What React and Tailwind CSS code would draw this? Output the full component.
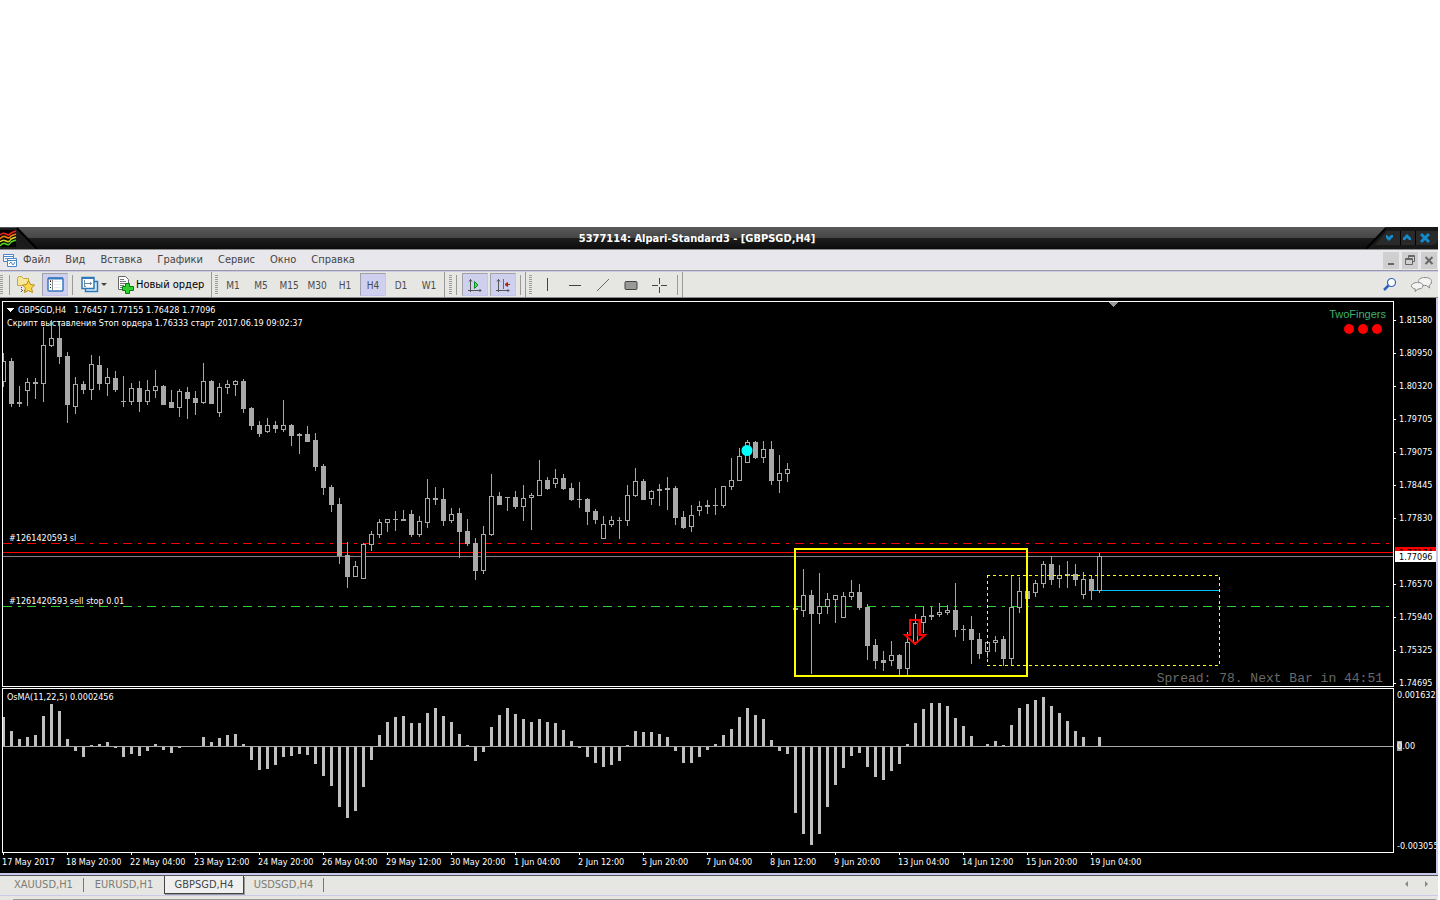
import React, { useState } from 'react';

// distance between two bars, and the x of the first one
const STEP = 8;
const FIRST = 3;

// [high, body top, body bottom, low, 1 = falling bar (filled)]
const CANDLES = [
  [353, 361, 382, 387, 0], [358, 361, 404, 407, 1], [386, 402, 404, 407, 1], [378, 382, 391, 406, 0],
  [378, 382, 384, 399, 1], [327, 345, 384, 402, 0], [320, 338, 346, 347, 0], [321, 338, 357, 364, 1],
  [352, 356, 405, 423, 1], [377, 384, 407, 414, 0], [381, 384, 390, 394, 1], [355, 364, 390, 400, 0],
  [356, 365, 384, 390, 1], [368, 377, 384, 396, 0], [371, 378, 390, 392, 1], [376, 401, 402, 407, 1],
  [383, 388, 402, 405, 0], [381, 388, 402, 412, 1], [380, 390, 402, 405, 0], [370, 386, 391, 398, 0],
  [385, 386, 405, 405, 1], [390, 402, 408, 408, 1], [389, 391, 408, 417, 0], [387, 392, 399, 419, 1],
  [391, 398, 403, 415, 1], [363, 381, 403, 404, 0], [380, 381, 404, 404, 1], [383, 387, 413, 417, 0],
  [380, 384, 388, 394, 0], [380, 381, 385, 396, 0], [379, 381, 409, 413, 1], [407, 408, 426, 430, 1],
  [421, 425, 434, 437, 1], [418, 425, 432, 433, 0], [421, 425, 429, 433, 1], [400, 425, 430, 432, 0],
  [424, 425, 436, 446, 1], [433, 434, 436, 454, 1], [426, 434, 442, 442, 1], [433, 440, 467, 471, 1],
  [464, 466, 488, 495, 1], [485, 487, 505, 512, 1], [498, 504, 556, 564, 1], [542, 555, 577, 588, 1],
  [561, 566, 577, 577, 0], [543, 544, 579, 579, 0], [531, 534, 545, 551, 0], [519, 522, 535, 538, 0],
  [519, 519, 523, 532, 0], [511, 519, 520, 531, 1], [510, 519, 521, 521, 1], [510, 514, 535, 537, 1],
  [516, 521, 535, 537, 0], [479, 498, 523, 528, 0], [487, 498, 500, 505, 1], [488, 499, 521, 526, 1],
  [508, 514, 521, 523, 0], [508, 513, 532, 558, 1], [519, 531, 544, 546, 1], [538, 543, 571, 580, 1],
  [526, 534, 571, 574, 0], [474, 496, 535, 536, 0], [492, 496, 505, 505, 1], [497, 497, 498, 511, 1],
  [491, 497, 507, 509, 1], [485, 498, 507, 521, 0], [493, 495, 498, 530, 0], [460, 480, 496, 496, 0],
  [477, 480, 489, 490, 1], [469, 478, 484, 488, 0], [474, 478, 489, 490, 1], [483, 488, 500, 501, 1],
  [482, 499, 500, 508, 1], [498, 499, 512, 525, 1], [509, 511, 520, 524, 1], [516, 524, 539, 539, 0],
  [516, 520, 525, 527, 0], [517, 520, 521, 539, 1], [485, 495, 521, 526, 0], [468, 481, 496, 497, 0],
  [479, 481, 500, 500, 1], [490, 491, 499, 505, 0], [484, 489, 491, 506, 1], [477, 488, 490, 510, 1],
  [486, 488, 518, 525, 1], [511, 517, 528, 529, 1], [505, 515, 527, 532, 0], [501, 506, 511, 516, 0],
  [500, 505, 507, 514, 1], [488, 505, 506, 515, 1], [486, 486, 506, 508, 0], [458, 480, 487, 490, 0],
  [448, 456, 481, 481, 0], [440, 442, 463, 463, 0], [441, 442, 458, 459, 1], [441, 449, 458, 463, 0],
  [441, 449, 481, 485, 1], [455, 473, 481, 493, 0], [463, 469, 474, 482, 0], [608, 608, 610, 610, 1],
  [569, 595, 611, 617, 0], [590, 595, 614, 674, 1], [573, 606, 614, 624, 0], [593, 599, 607, 614, 0],
  [595, 595, 600, 623, 0], [592, 596, 618, 618, 0], [580, 592, 597, 600, 0], [584, 592, 608, 610, 1],
  [604, 607, 646, 660, 1], [639, 645, 661, 669, 1], [651, 660, 663, 671, 1], [641, 655, 661, 666, 0],
  [654, 655, 669, 675, 1], [632, 642, 669, 675, 0], [614, 623, 643, 645, 0], [606, 616, 623, 633, 0],
  [607, 615, 617, 620, 1], [603, 612, 615, 617, 0], [605, 610, 613, 615, 0], [583, 610, 630, 637, 1],
  [625, 629, 630, 641, 1], [616, 629, 640, 664, 1], [633, 639, 654, 659, 1], [641, 642, 652, 658, 0],
  [636, 640, 643, 652, 0], [636, 639, 659, 666, 1], [576, 607, 659, 665, 0], [577, 591, 608, 613, 0],
  [591, 591, 599, 600, 1], [580, 583, 593, 597, 0], [561, 564, 584, 588, 0], [556, 564, 580, 585, 1],
  [565, 575, 579, 588, 0], [561, 574, 576, 588, 1], [564, 574, 580, 586, 1], [572, 579, 595, 599, 0],
  [576, 579, 591, 600, 1], [553, 556, 591, 593, 0],
];

// histogram heights, measured from the zero line
const OSMA = [
  29, 15, 7, 9, 11, 30, 42, 35, 7, -4, -10, 1, 2, 4, -1, -10, -7, -9, -4, 2, -3, -6, -1, 0, 0,
  9, 4, 8, 11, 12, 2, -13, -23, -22, -18, -10, -9, -7, -8, -17, -29, -39, -60, -71, -64, -40, -13, 11, 24, 29,
  30, 23, 23, 33, 38, 30, 24, 12, 1, -14, -5, 19, 31, 38, 32, 27, 24, 27, 24, 23, 16, 5, -1, -10, -16,
  -20, -18, -14, 1, 15, 14, 14, 12, 9, -4, -16, -16, -10, -3, 2, 11, 17, 29, 38, 31, 27, 6, -4, -7, -66,
  -87, -98, -87, -60, -38, -21, -9, -6, -20, -30, -33, -24, -17, 2, 23, 37, 43, 43, 40, 28, 20, 10, 0, 2, 5,
  1, 21, 38, 42, 46, 49, 40, 33, 25, 15, 9, 0, 9,
];

const MENU = ['Файл', 'Вид', 'Вставка', 'Графики', 'Сервис', 'Окно', 'Справка'];
const PERIODS = ['M1', 'M5', 'M15', 'M30', 'H1', 'H4', 'D1', 'W1'];
const PRICES_HIGH = ['1.81580', '1.80950', '1.80320', '1.79705', '1.79075', '1.78445', '1.77830'];
const PRICES_LOW = ['1.76570', '1.75940', '1.75325', '1.74695'];
const TIMES = [
  '17 May 2017', '18 May 20:00', '22 May 04:00', '23 May 12:00', '24 May 20:00', '26 May 04:00',
  '29 May 12:00', '30 May 20:00', '1 Jun 04:00', '2 Jun 12:00', '5 Jun 20:00', '7 Jun 04:00',
  '8 Jun 12:00', '9 Jun 20:00', '13 Jun 04:00', '14 Jun 12:00', '15 Jun 20:00', '19 Jun 04:00',
];
const TABS = ['XAUUSD,H1', 'EURUSD,H1', 'GBPSGD,H4', 'USDSGD,H4'];

function TitleBar() {
  return (
    <header className="flex h-[23px] items-stretch border-b border-[#8c8c8c] [background-image:linear-gradient(#5a5a5a,#464646_48%,#1f1f1f_48%,#0c0c0c)]">
      <svg className="h-[22px] w-[38px] shrink-0" aria-hidden="true">
        <path d="M0 1H17L37 22H0Z" fill="#1b1b1b" />
        <path d="M17 1L37 22" stroke="#000" strokeWidth="2" />
        <path d="M0 3H16V20H0Z" fill="#000" />
        <path d="M0 8Q3 5 6 7T11 6L16 4" stroke="#f02020" strokeWidth="1.6" fill="none" />
        <path d="M0 12Q3 8 6 10T11 9L16 7" stroke="#f08010" strokeWidth="1.6" fill="none" />
        <path d="M0 15Q3 12 6 14T11 12L16 10" stroke="#d8d820" strokeWidth="1.6" fill="none" />
        <path d="M0 19Q3 15 6 17T11 15L16 13" stroke="#50d020" strokeWidth="1.6" fill="none" />
      </svg>
      <h1 className="flex-1 text-center text-[11px] leading-6 font-bold text-white">
        5377114: Alpari-Standard3 - [GBPSGD,H4]
      </h1>
      <div className="flex w-[82px] shrink-0 items-stretch justify-end">
        <svg className="h-[22px] w-5" aria-hidden="true">
          <path d="M20 1V22H0Z" fill="#181818" />
          <path d="M0 22L20 1" stroke="#000" strokeWidth="2" />
          <path d="M9 18L20 5V18Z" fill="#2a2a2a" />
        </svg>
        <div className="flex bg-[#181818] pt-1 pb-1">
          <button type="button" aria-label="Свернуть" className="h-3.5 w-[15px] border-r border-black bg-[#2a2a2a]">
            <svg width="14" height="14"><path d="M-1 4H1L3 6L5 4H7V6L3 10L-1 6Z" fill="#1489cc" /></svg>
          </button>
          <button type="button" aria-label="Развернуть" className="h-3.5 w-[15px] border-r border-black bg-[#2a2a2a]">
            <svg width="14" height="14"><path d="M2 9H4L6 7L8 9H10V7L6 3L2 7Z" fill="#1489cc" /></svg>
          </button>
          <button type="button" aria-label="Закрыть" className="h-3.5 w-[22px] rounded-br-md bg-[#2a2a2a]">
            <svg width="22" height="14"><path d="M5 3L13 11M13 3L5 11" stroke="#1489cc" strokeWidth="3" /></svg>
          </button>
        </div>
      </div>
    </header>
  );
}

function MenuBar() {
  return (
    <nav className="flex h-[21px] items-center border-b border-[#9b9b9b] bg-[#e8e8ec] pl-[3px]">
      <svg width="14" height="14" className="mr-1.5 shrink-0" fill="#fff" stroke="#4a86c8" aria-hidden="true">
        <path d="M.5 1.5H10.5V8.5H.5ZM.5 3.5H10.5" />
        <path d="M2 6L4 5L5 6" fill="none" />
        <path d="M4.500 5.500H13.500V13.500H4.500ZM4.500 7.500H13.500" />
        <path d="M6 11L8 9L10 12L12 9" fill="none" />
      </svg>
      <div className="flex flex-1 gap-[15px] pt-px text-[11px] text-[#444]">
        {MENU.map(m => <button key={m} type="button">{m}</button>)}
      </div>
      <div className="flex gap-[3px] pr-px">
        <button type="button" aria-label="Свернуть окно" className="h-[17px] w-4 bg-[#cfcfcf] text-[#666]">
          <svg width="16" height="17"><path d="M5 12H11" stroke="currentColor" strokeWidth="2" /></svg>
        </button>
        <button type="button" aria-label="Восстановить окно" className="h-[17px] w-4 bg-[#cfcfcf] text-[#666]">
          <svg width="16" height="17" fill="none" stroke="currentColor"><path d="M6.500 6V3.500H12.500V9.500H11M3.500 6.500H10.500V12.500H3.500ZM3.500 7.500H10.500M6 4.500H12" /></svg>
        </button>
        <button type="button" aria-label="Закрыть окно" className="h-[17px] w-4 bg-[#cfcfcf] text-[#666]">
          <svg width="16" height="17"><path d="M4.500 5L11.500 12M11.500 5L4.500 12" stroke="currentColor" strokeWidth="2" /></svg>
        </button>
      </div>
    </nav>
  );
}

function Grip() {
  return <span className="h-[19px] w-[3px] shrink-0 [background-image:repeating-linear-gradient(#9c9c9c_0_1px,transparent_1px_2px)]" />;
}

function Sep({ className = '' }) {
  return <span className={`h-5 w-px shrink-0 bg-[#999] ${className}`} />;
}

function Divider({ className = '' }) {
  return <span className={`h-full w-px shrink-0 bg-[#999] ${className}`} />;
}

const pressed = 'border border-[#a0a0a8] border-r-[#c4c4f0] border-b-[#c4c4f0] bg-[#cfcfee]';

function ToolBar({ period, setPeriod }) {
  return (
    <div className="flex h-[27px] items-center border-t border-b border-t-[#c9c9ee] border-b-[#8a8a8a] bg-[#e6e6e2] text-[#4c4c4c]">
      <Grip />
      <Sep className="ml-1.5" />
      <button type="button" aria-label="Избранное" className="ml-1.5 flex w-5 justify-center">
        <svg width="20" height="20">
          <path d="M1.500 3.500Q1.500 1.500 3.500 1.500H5.500L7.500 3.500H12.500V10.500H1.500Z" fill="#f8e69a" stroke="#c9a43c" />
          <path d="M5.500 12V17M6 15.500H9" stroke="#555" strokeDasharray="1 1" />
          <path d="M12.500 5.500L14.500 9.500L18.500 10L15.500 13L16.500 17.500L12.500 15.500L8.500 17.500L9.500 13L6.500 10L10.500 9.500Z" fill="#fcd94c" stroke="#b98c1c" />
        </svg>
      </button>
      <button type="button" aria-label="Навигатор" aria-pressed="true" className={`ml-1.5 flex h-[23px] w-[26px] items-center justify-center ${pressed}`}>
        <svg width="17" height="15">
          <rect x="1" y="1" width="15" height="13" rx="1" fill="#fff" stroke="#3a78bc" strokeWidth="1.500" />
          <path d="M1 1.500H16" stroke="#3a78bc" strokeWidth="2" />
          <path d="M5.500 3V13" stroke="#888" />
          <path d="M3 4.500H4M3 7.500H4M3 10.500H4" stroke="#222" />
          <path d="M3 3.500H4" stroke="#d33" />
          <path d="M7 4.500H14M7 7.500H14M7 10.500H14" stroke="#e2edf8" />
        </svg>
      </button>
      <Sep className="ml-1" />
      <button type="button" aria-label="Профили" className="ml-2 flex items-center">
        <svg width="18" height="18" fill="#fff" stroke="#2f78b8">
          <path d="M4.500 5.500H16.500V15.500H4.500Z" fill="#d6e8f8" strokeWidth="1.5" />
          <path d="M1 1.500H13V12.500H1Z" strokeWidth="1.500" />
          <path d="M1 2H13" strokeWidth="2" />
          <path d="M3.500 4V10M3 7.500H11M9.500 6V9M3 10.500H5" stroke="#6a8aa8" />
        </svg>
        <svg width="8" height="6" className="ml-0.5"><path d="M0 1H6L3 4Z" fill="#444" /></svg>
      </button>
      <button type="button" className="ml-2 flex items-center gap-px pt-px text-[11px] text-black">
        <svg width="18" height="20">
          <path d="M1.500 1.500H8.500L11.500 4.500V14.500H1.500Z" fill="#fff" stroke="#666" />
          <path d="M3 4.500H7M3 6.500H9M3 8.500H9M3 10.500H7M3 12.500H7" stroke="#777" />
          <path d="M8.500 8.500H12.500V11.500H16.500V15.500H12.500V18.500H8.500V15.500H5.500V11.500H8.500Z" fill="#2fd02f" stroke="#0a7a12" />
        </svg>
        <span className="w-[70px] text-left whitespace-nowrap">Новый ордер</span>
      </button>
      <Divider className="ml-[5px]" />
      <span className="ml-[3px] flex"><Grip /></span>
      <div className="ml-px flex">
        {PERIODS.map(p => (
          <button
            key={p}
            type="button"
            aria-pressed={p === period}
            onClick={() => setPeriod(p)}
            className={`mx-px h-[23px] w-[26px] pt-px text-[10px] ${p === period ? pressed : ''}`}
          >
            {p}
          </button>
        ))}
      </div>
      <Divider className="ml-px" />
      <span className="ml-1 flex"><Grip /></span>
      <Sep className="ml-1" />
      <button type="button" aria-label="Автопрокрутка" aria-pressed="true" className={`ml-[5px] flex h-[23px] w-[26px] items-center justify-center ${pressed}`}>
        <svg width="16" height="16" fill="none" stroke="#555">
          <path d="M3.500 2V15M1 13.500H14M2 4.500L3.500 2.500L5 4.500M12.500 12L14 13.500L12.500 15" />
          <path d="M7.500 4.500L11 8L7.500 11.500Z" fill="#4fe04f" stroke="#0a8a20" />
        </svg>
      </button>
      <button type="button" aria-label="Сдвиг графика" aria-pressed="true" className={`ml-0.5 flex h-[23px] w-[26px] items-center justify-center ${pressed}`}>
        <svg width="16" height="16" fill="none" stroke="#555">
          <path d="M3.500 2V15M1 13.500H14M2 4.500L3.500 2.500L5 4.500M12.500 12L14 13.500L12.500 15" />
          <path d="M8.500 2V12" stroke="#2a7ab8" />
          <path d="M10 7.500L12.500 5.500V9.500Z" fill="#c03010" stroke="#a02808" />
          <path d="M12 7.500H15" stroke="#a02808" />
        </svg>
      </button>
      <Sep className="ml-1" />
      <Divider className="ml-1" />
      <span className="ml-[3px] flex"><Grip /></span>
      <div className="ml-px flex">
        <button type="button" aria-label="Вертикальная линия" className="flex w-7 justify-center"><svg width="14" height="14" stroke="#444"><path d="M7.500 1V14" /></svg></button>
        <button type="button" aria-label="Горизонтальная линия" className="flex w-7 justify-center"><svg width="14" height="14" stroke="#444"><path d="M1 8.500H13" /></svg></button>
        <button type="button" aria-label="Трендовая линия" className="flex w-7 justify-center"><svg width="14" height="14" stroke="#666"><path d="M1 14L13 2" /></svg></button>
        <button type="button" aria-label="Прямоугольник" className="flex w-7 justify-center"><svg width="14" height="14" stroke="#444"><rect x="1" y="4.500" width="12" height="8" rx="1" fill="#999" /></svg></button>
        <button type="button" aria-label="Перекрестие" className="flex w-7 justify-center"><svg width="16" height="16" stroke="#444"><path d="M8.500 1V7M8.500 10V16M1 8.500H7M10 8.500H16" /></svg></button>
      </div>
      <Sep className="ml-1" />
      <Divider className="ml-1" />
      <div className="flex flex-1 items-center justify-end gap-3 pr-1">
        <button type="button" aria-label="Поиск">
          <svg width="16" height="16" fill="#fff" stroke="#2f62c0">
            <path d="M6.500 8.500L2 13" strokeWidth="2.500" />
            <circle cx="9.500" cy="5.500" r="4" strokeWidth="1.200" />
          </svg>
        </button>
        <button type="button" aria-label="Чат">
          <svg width="24" height="17" fill="#f4f4f4" stroke="#888">
            <path d="M15 1.500C19 1.500 21.500 3 21.500 5.500S20 9 19 9.500L19.500 12L16.500 9.500C11 9.500 8.500 8 8.500 5.500S11 1.500 15 1.500Z" />
            <path d="M7.500 6.500C11 6.500 13 7.800 13 9.800S11 13 8 13L5 15.500L5.300 13C3 12.500 1.500 11.500 1.500 9.800S4 6.500 7.500 6.500Z" />
          </svg>
        </button>
      </div>
    </div>
  );
}

function PriceChart() {
  return (
    <div className="relative h-[386px] border border-white">
      <svg className="block h-full w-full" shapeRendering="crispEdges" role="img" aria-label="GBPSGD,H4">
        <g transform="translate(-3 -302)">
          {/* order levels, ask and bid */}
          <line x1="3" y1="543.5" x2="100%" y2="543.5" stroke="#f00" strokeDasharray="9 6 3 6" />
          <line x1="3" y1="606.5" x2="100%" y2="606.5" stroke="#32cd32" strokeDasharray="9 6 3 6" />
          <line x1="3" y1="552.5" x2="101%" y2="552.5" stroke="#f00" />
          <line x1="3" y1="556.5" x2="101%" y2="556.5" stroke="#808080" />
          <line x1="1093" y1="590.5" x2="1220" y2="590.5" stroke="#00bfff" />
          {CANDLES.map(([high, top, bottom, low, falling], i) => {
            const x = FIRST + i * STEP;
            return (
              <g key={i}>
                <rect x={x} y={high} width="1" height={low - high} fill="#a9a9a9" />
                <rect x={x - 2} y={top} width="5" height={bottom - top} fill="#a9a9a9" />
                {!falling && <rect x={x - 1} y={top + 1} width="3" height={bottom - top - 2} fill="#000" />}
              </g>
            );
          })}
          <g shapeRendering="geometricPrecision">
            <circle cx="747" cy="450.500" r="5.500" fill="#0ff" />
            <path d="M918.500 621V635H922" stroke="#a00000" strokeWidth="2" fill="none" />
            <path d="M910 620H920V635H925L915 644L905 635H910Z" stroke="#f00" strokeWidth="2" fill="none" />
          </g>
          <rect x="795" y="549" width="232" height="127" stroke="#ff0" strokeWidth="2" fill="none" />
          <g stroke="#ff0" strokeDasharray="3 3">
            <line x1="987" y1="575.5" x2="1219" y2="575.5" />
            <line x1="987" y1="665.5" x2="1219" y2="665.5" />
            <line x1="987.5" y1="575" x2="987.5" y2="666" />
            <line x1="1219.5" y1="577" x2="1219.500" y2="666" />
          </g>
          <path d="M6 308H14L10 312Z" fill="#fff" />
          <path d="M1108 302H1119L1113.500 307Z" fill="#999" />
        </g>
      </svg>
      <p className="absolute top-0 left-[15px] text-[9px] leading-4 whitespace-pre">GBPSGD,H4   1.76457 1.77155 1.76428 1.77096</p>
      <p className="absolute top-[13px] left-1 text-[9px] leading-4">Скрипт выставления Sтоп ордера 1.76333 старт 2017.06.19 09:02:37</p>
      <p className="absolute top-[228px] left-1.5 text-[9px] leading-4">#1261420593 sl</p>
      <p className="absolute top-[291px] left-1.5 text-[9px] leading-4">#1261420593 sell stop 0.01</p>
      <div className="absolute top-1 right-[7px] flex flex-col items-end">
        <p className="text-[11px] leading-4 text-[#3cb371] [font-family:'Liberation_Sans',sans-serif]">TwoFingers</p>
        <div className="mr-1 flex gap-1 pt-0.5">
          <span className="size-2.5 rounded-full bg-[#f00]" />
          <span className="size-2.5 rounded-full bg-[#f00]" />
          <span className="size-2.5 rounded-full bg-[#f00]" />
        </div>
      </div>
      <p className="absolute right-[10px] -bottom-px text-[13px] leading-4 text-[#696969] [font-family:'Liberation_Mono',monospace]">
        Spread: 78. Next Bar in 44:51
      </p>
    </div>
  );
}

function OsmaChart() {
  return (
    <div className="relative mt-px h-[165px] border border-white">
      <svg className="block h-full w-full" shapeRendering="crispEdges" role="img" aria-label="OsMA">
        {OSMA.map((v, i) => (
          <rect key={i} x={i * STEP - 1} y={v > 0 ? 57 - v : 58} width="3" height={Math.abs(v)} fill="#c0c0c0" />
        ))}
        <line x1="0" y1="57.5" x2="100%" y2="57.5" stroke="#a9a9a9" />
      </svg>
      <p className="absolute top-0 left-1 text-[9px] leading-4">OsMA(11,22,5) 0.0002456</p>
    </div>
  );
}

function PriceLabel({ children }) {
  return (
    <div className="flex h-[33px] items-center">
      <span className="mr-[3px] h-px w-0.5 bg-white" />
      {children}
    </div>
  );
}

function Scale() {
  return (
    <div className="flex w-[42px] shrink-0 flex-col overflow-hidden text-[9px]">
      <div className="h-[387px] pt-[3px]">
        {PRICES_HIGH.map(p => <PriceLabel key={p}>{p}</PriceLabel>)}
        <div className="h-[33px] pt-3 pl-px">
          <div className="h-1 overflow-hidden bg-[#f00] pl-1 leading-3 text-black">1.77174</div>
          <div className="h-[11px] bg-white pl-1 leading-3 text-black">1.77096</div>
        </div>
        {PRICES_LOW.map(p => <PriceLabel key={p}>{p}</PriceLabel>)}
      </div>
      <div className="flex h-[165px] flex-col pl-[3px] leading-3">
        <span className="pt-px whitespace-nowrap">0.0016328</span>
        <span className="mt-[39px] whitespace-nowrap"><span className="bg-[#a9a9a9]">0</span>.00</span>
        <span className="mt-auto pb-px whitespace-nowrap">-0.003055</span>
      </div>
    </div>
  );
}

function TimeAxis() {
  return (
    <ol className="flex h-[20px] overflow-hidden pl-0.5 text-[9px]">
      {TIMES.map(t => (
        <li key={t} className="w-16 shrink-0 whitespace-nowrap">
          <span className="ml-px block h-0.5 w-px bg-white" />
          <span className="block leading-[14px]">{t}</span>
        </li>
      ))}
    </ol>
  );
}

function ChartTabs({ tab, setTab }) {
  return (
    <footer className="bg-[#e6e6e2] text-[11px]">
      <div className="flex h-5 items-start border-t border-[#55555c] pl-1">
        {TABS.map(t => (
          <button
            key={t}
            type="button"
            onClick={() => setTab(t)}
            className={t === tab
              ? 'h-[18px] w-20 border border-t-0 border-[#444] bg-[#f0f0f0] leading-3 text-[#444] shadow-[1px_1px_0_#999]'
              : 'mt-0.5 h-3.5 w-20 border-r border-[#77776c] leading-3 text-[#7c7c74] nth-2:border-r-0'}
          >
            {t}
          </button>
        ))}
        <div className="flex flex-1 justify-end gap-3 pt-1 pr-[7px]">
          <button type="button" aria-label="Назад"><svg width="8" height="8"><path d="M5 1V7L2 4Z" fill="#888" /></svg></button>
          <button type="button" aria-label="Вперёд"><svg width="8" height="8"><path d="M2 1V7L5 4Z" fill="#888" /></svg></button>
        </div>
      </div>
      <div className="h-[5px] border-t border-[#c9c9ee] pt-[3px] pr-0.5 pl-[13px]"><div className="h-px bg-[#999]" /></div>
    </footer>
  );
}

export default function App() {
  const [period, setPeriod] = useState('H4');
  const [tab, setTab] = useState('GBPSGD,H4');

  return (
    <div className="min-h-screen bg-white pt-[227px] pr-0.5 [font-family:'DejaVu_Sans_Condensed','Noto_Sans',sans-serif]">
      <TitleBar />
      <MenuBar />
      <ToolBar period={period} setPeriod={setPeriod} />
      <main className="border-r-2 border-b-2 border-[#c9c9ee] bg-black pt-[3px] text-white">
        <div className="flex pl-0.5">
          <div className="min-w-0 flex-1">
            <PriceChart />
            <OsmaChart />
          </div>
          <Scale />
        </div>
        <TimeAxis />
      </main>
      <ChartTabs tab={tab} setTab={setTab} />
    </div>
  );
}
